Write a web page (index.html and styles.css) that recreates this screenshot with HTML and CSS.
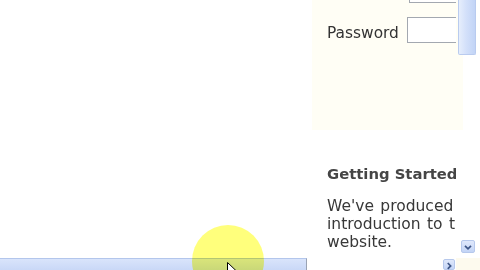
FILE: index.html
```html
<!DOCTYPE html>
<html lang="en">
<head>
<meta charset="utf-8">
<title>Login</title>
<link rel="stylesheet" href="styles.css">
</head>
<body>
<div class="window">
  <div class="viewport">
    <div class="page">
      <aside class="sidebar">
        <form class="login">
          <div class="row"><label class="lbl">Username</label><span class="input input-user"></span></div>
          <div class="row"><label class="lbl">Password</label><span class="input"></span></div>
        </form>
        <h3 class="heading">Getting Started</h3>
        <p class="intro">We've produced a short introduction to the website.</p>
      </aside>
    </div>
  </div>
  <div class="vscroll">
    <div class="vthumb"></div>
    <div class="sbtn sbtn-down">
      <svg width="14" height="13" viewBox="0 0 14 13"><polyline points="3.5,4.5 7,8 10.5,4.5" fill="none" stroke="#3d5586" stroke-width="2"/></svg>
    </div>
  </div>
  <div class="edge"></div>
  <div class="hscroll">
    <div class="hthumb"></div>
    <div class="sbtn sbtn-right">
      <svg width="12" height="11" viewBox="0 0 12 11"><polyline points="4.5,2.5 8,6 4.5,9.5" fill="none" stroke="#3d5586" stroke-width="2"/></svg>
    </div>
  </div>
  <div class="corner"></div>
  <div class="highlight"></div>
  <svg class="cursor" width="12" height="19" viewBox="0 0 12 19"><path d="M0.5,0.5 L0.5,15 L4,11.5 L6.5,17.5 L8.5,16.5 L6,10.5 L11,10.5 Z" fill="#fff" stroke="#000" stroke-width="1"/></svg>
</div>
</body>
</html>
```

FILE: styles.css
```css
html, body {
  margin: 0;
  padding: 0;
  background: #fff;
}

.window {
  position: relative;
  width: 480px;
  height: 270px;
  overflow: hidden;
  display: grid;
  grid-template-columns: 456px 20px 4px;
  grid-template-rows: 258px 12px;
  font-family: "DejaVu Sans", Verdana, sans-serif;
}

.viewport {
  grid-column: 1;
  grid-row: 1;
  overflow: hidden;
  background: #fff;
}

.page {
  display: flex;
  padding-left: 312px;
  margin-top: -40px;
}

.sidebar {
  flex: none;
  width: 210px;
}

.login {
  width: 151px;
  height: 153px;
  padding-top: 17px;
  background: #fffef5;
  display: flex;
  flex-direction: column;
  gap: 14px;
  margin: 0;
}

.row {
  display: flex;
  align-items: flex-start;
  padding-left: 15px;
}

.lbl {
  width: 80px;
  flex: none;
  padding-top: 7px;
  font-size: 15.4px;
  line-height: 18px;
  color: #333;
}

.input {
  display: block;
  flex: none;
  width: 70px;
  height: 24px;
  border: 1px solid #a3a8b0;
  background: #fff;
}

.input-user {
  margin-left: 2px;
}

.heading {
  margin: 35px 0 0;
  padding-left: 15px;
  font-size: 14.8px;
  line-height: 18px;
  font-weight: bold;
  color: #454545;
  white-space: nowrap;
}

.intro {
  margin: 14px 0 0;
  padding-left: 15px;
  width: 195px;
  font-size: 15.5px;
  line-height: 18px;
  word-spacing: 1.5px;
  color: #383838;
}

.vscroll {
  grid-column: 2;
  grid-row: 1;
  display: flex;
  flex-direction: column;
  justify-content: space-between;
  background: linear-gradient(to right, #fffef5 7px, #fff 7px) no-repeat;
  background-size: 100% 130px;
}

.vthumb {
  height: 55px;
  margin-left: 2px;
  box-sizing: border-box;
  border: 1px solid #b9cbef;
  border-top: none;
  border-radius: 0 0 2px 2px;
  background: linear-gradient(to right, #e6eefc, #d3e0fa 45%, #c2d4f6);
}

.sbtn {
  display: flex;
  box-sizing: border-box;
  border: 1px solid #b6c8ec;
  border-radius: 2px;
  background: linear-gradient(#dfe8fb, #c3d4f6);
}

.sbtn-down {
  width: 14px;
  height: 13px;
  margin: 0 0 5px 5px;
}

.edge {
  grid-column: 3;
  grid-row: 1;
  background: #fff;
}

.hscroll {
  grid-column: 1;
  grid-row: 2;
  display: flex;
  align-items: flex-end;
  background: #fff;
}

.hthumb {
  width: 307px;
  height: 12px;
  box-sizing: border-box;
  border-top: 1px solid #b3c6ec;
  border-right: 1px solid #9aa3b4;
  background: linear-gradient(#d9e4fb, #c9d8f7);
}

.sbtn-right {
  width: 12px;
  height: 11px;
  margin-left: auto;
  margin-right: 1px;
}

.corner {
  grid-column: 2 / 4;
  grid-row: 2;
  background: #fdfaee;
}

.highlight {
  position: absolute;
  left: 192px;
  top: 225px;
  width: 72px;
  height: 72px;
  border-radius: 50%;
  background: #ffff7c;
  mix-blend-mode: multiply;
}

.cursor {
  position: absolute;
  left: 227px;
  top: 262px;
}
```
